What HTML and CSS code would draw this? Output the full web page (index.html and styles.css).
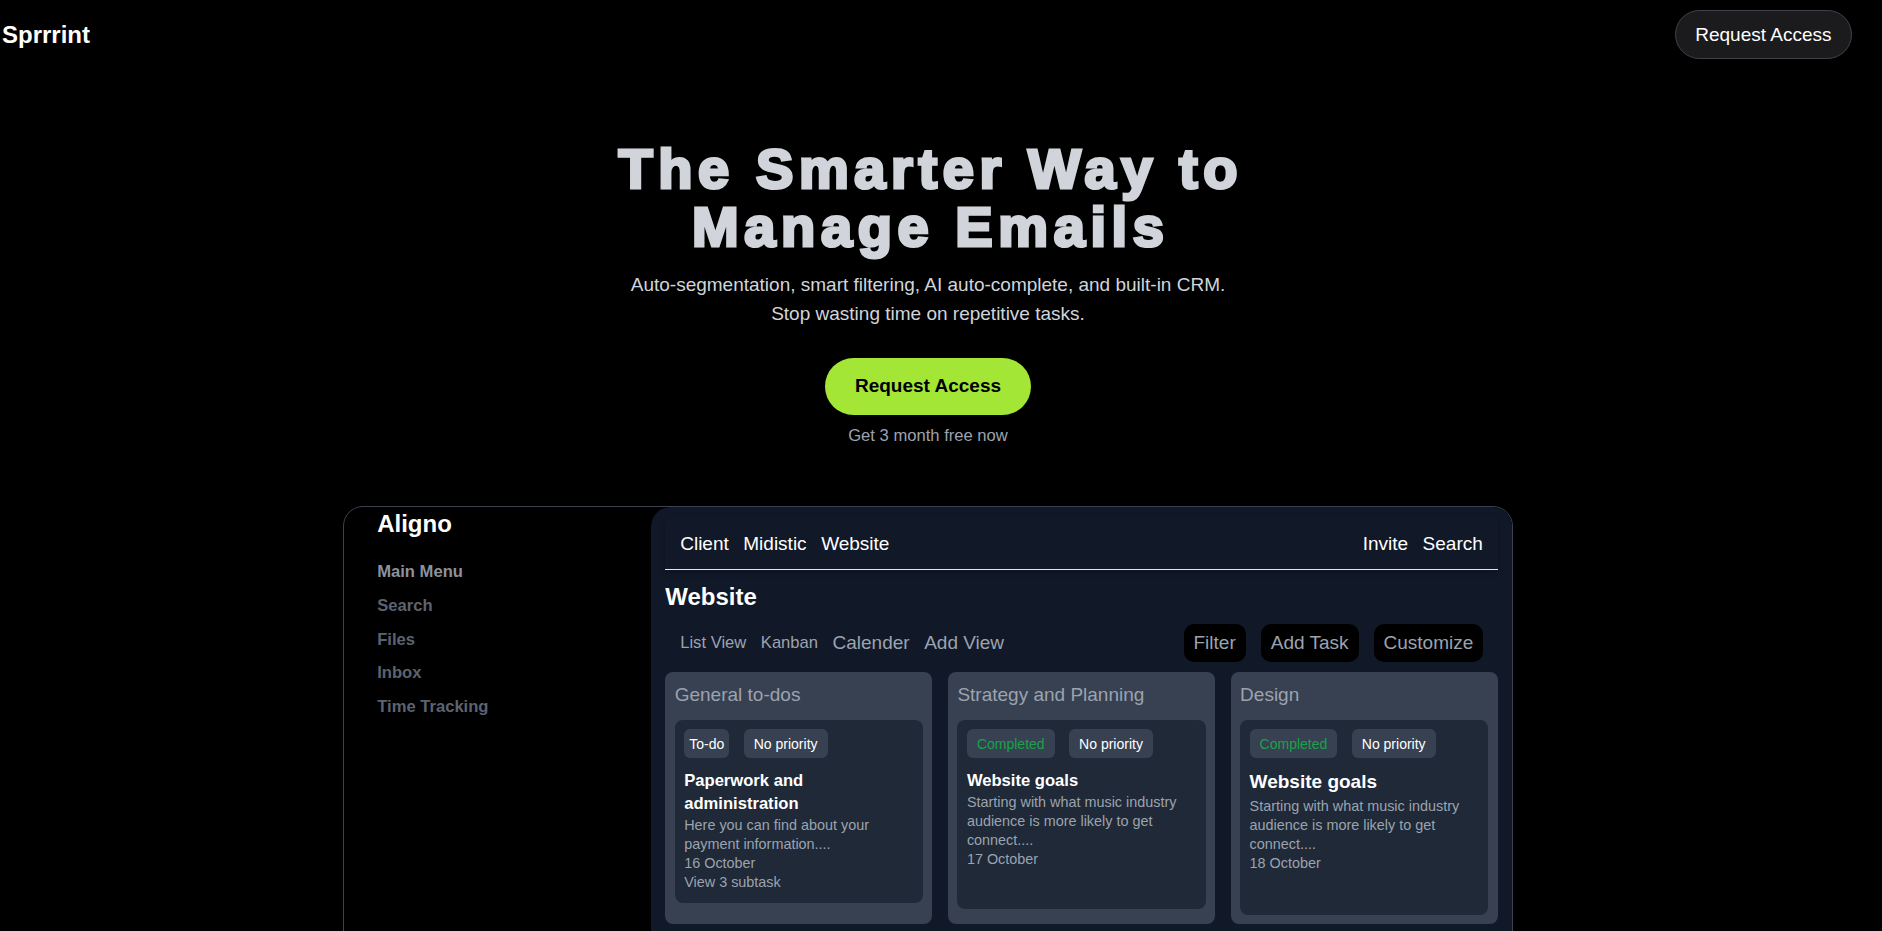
FILE: index.html
```html
<!DOCTYPE html>
<html lang="en">
<head>
<meta charset="utf-8">
<title>Sprrrint</title>
<link rel="stylesheet" href="styles.css">
</head>
<body>
<div class="page">
  <header class="header">
    <div class="logo">Sprrrint</div>
    <button class="header-btn">Request Access</button>
  </header>

  <section class="hero">
    <h1 class="hero-title">The Smarter Way to<br>Manage Emails</h1>
    <p class="hero-sub">Auto-segmentation, smart filtering, AI auto-complete, and built-in CRM.<br>Stop wasting time on repetitive tasks.</p>
    <div class="cta-wrap"><button class="cta">Request Access</button></div>
    <p class="free">Get 3 month free now</p>
  </section>

  <section class="dash">
    <aside class="sidebar">
      <div class="brand">Aligno</div>
      <nav class="menu">
        <a class="menu-item menu-main">Main Menu</a>
        <a class="menu-item">Search</a>
        <a class="menu-item">Files</a>
        <a class="menu-item">Inbox</a>
        <a class="menu-item">Time Tracking</a>
      </nav>
    </aside>

    <main class="panel">
      <div class="topbar">
        <div class="topbar-group">
          <span>Client</span><span>Midistic</span><span>Website</span>
        </div>
        <div class="topbar-group">
          <span>Invite</span><span>Search</span>
        </div>
      </div>

      <h2 class="panel-title">Website</h2>

      <div class="views">
        <div class="views-left">
          <span class="v-sm">List View</span>
          <span class="v-sm">Kanban</span>
          <span class="v-lg">Calender</span>
          <span class="v-lg">Add View</span>
        </div>
        <div class="views-right">
          <span class="tbtn">Filter</span>
          <span class="tbtn">Add Task</span>
          <span class="tbtn">Customize</span>
        </div>
      </div>

      <div class="cols">
        <div class="col">
          <div class="col-title">General to-dos</div>
          <div class="card">
            <div class="badges">
              <span class="badge tight">To-do</span>
              <span class="badge">No priority</span>
            </div>
            <h3 class="card-title">Paperwork and administration</h3>
            <div class="desc">
              <p>Here you can find about your payment information....</p>
              <p>16 October</p>
              <p>View 3 subtask</p>
            </div>
          </div>
        </div>

        <div class="col">
          <div class="col-title">Strategy and Planning</div>
          <div class="card">
            <div class="badges">
              <span class="badge done">Completed</span>
              <span class="badge">No priority</span>
            </div>
            <h3 class="card-title">Website goals</h3>
            <div class="desc">
              <p>Starting with what music industry audience is more likely to get connect....</p>
              <p>17 October</p>
            </div>
            <div class="spacer"></div>
          </div>
        </div>

        <div class="col">
          <div class="col-title">Design</div>
          <div class="card">
            <div class="badges">
              <span class="badge done">Completed</span>
              <span class="badge">No priority</span>
            </div>
            <h3 class="card-title big">Website goals</h3>
            <div class="desc">
              <p>Starting with what music industry audience is more likely to get connect....</p>
              <p>18 October</p>
            </div>
            <div class="spacer big"></div>
          </div>
        </div>
      </div>
    </main>
  </section>
</div>
</body>
</html>
```

FILE: styles.css
```css
* {
  box-sizing: border-box;
  margin: 0;
  padding: 0;
}

html,
body {
  overflow: hidden;
  background: #000;
}

body {
  font-family: "Liberation Sans", Arial, sans-serif;
  color: #fff;
}

.page {
  width: calc(100% - 26px);
}

/* Header */
.header {
  display: flex;
  justify-content: space-between;
  align-items: center;
  padding: 10px 4px 0 2px;
}

.logo {
  font-size: 24px;
  line-height: 28px;
  font-weight: 700;
  color: #fff;
}

.header-btn {
  font-family: inherit;
  font-size: 19px;
  line-height: 22px;
  padding: 12.5px 19.5px;
  border: 1px solid #3f434b;
  border-radius: 999px;
  background: #1b1b1e;
  color: #fff;
}

/* Hero */
.hero {
  text-align: center;
  padding-top: 80.7px;
}

.hero-title {
  font-size: 56px;
  line-height: 58.4px;
  font-weight: 700;
  color: #d1d5db;
  letter-spacing: 5.6px;
  padding-left: 5.6px;
  -webkit-text-stroke: 3.1px #d1d5db;
}

.hero-sub {
  margin-top: 13.3px;
  font-size: 19px;
  line-height: 29.25px;
  color: #d1d5db;
}

.cta-wrap {
  margin-top: 29.7px;
}

.cta {
  font-family: inherit;
  font-size: 19px;
  line-height: 22px;
  font-weight: 700;
  color: #000;
  background: #a3e635;
  border: none;
  border-radius: 999px;
  padding: 17.5px 29.6px;
}

.free {
  margin-top: 9px;
  font-size: 16.6px;
  line-height: 24px;
  color: #9ca3af;
}

/* Dashboard */
.dash {
  margin: 58px auto 0;
  width: 1170.6px;
  height: 450px;
  border: 1px solid #3b414d;
  border-radius: 20px;
  display: grid;
  grid-template-columns: 307px 1fr;
  background: #000;
}

.sidebar {
  padding: 3px 0 0 33.5px;
}

.brand {
  font-size: 24px;
  line-height: 28px;
  font-weight: 700;
  color: #fff;
}

.menu {
  margin-top: 17.3px;
  display: flex;
  flex-direction: column;
}

.menu-item {
  font-size: 16.6px;
  line-height: 33.7px;
  font-weight: 700;
  color: #5c6370;
}

.menu-main {
  color: #8b929e;
}

.panel {
  background: #111827;
  border-radius: 20px;
  padding: 10px 14.5px 12px;
}

.topbar {
  display: flex;
  justify-content: space-between;
  padding: 16.5px 15px 13.5px;
  border-bottom: 1px solid #e5e7eb;
  box-shadow: 0 2px 6px rgba(0, 0, 0, 0.25);
}

.topbar-group {
  display: flex;
  gap: 14.5px;
  font-size: 19px;
  line-height: 22px;
  color: #fff;
}

.panel-title {
  margin-top: 11px;
  font-size: 24px;
  line-height: 32px;
  font-weight: 700;
  color: #fff;
}

.views {
  margin-top: 11.3px;
  display: flex;
  justify-content: space-between;
  align-items: center;
  padding: 0 14.5px 0 15px;
}

.views-left {
  display: flex;
  align-items: center;
  gap: 14.5px;
  color: #9ca3af;
}

.v-sm {
  font-size: 16.6px;
}

.v-lg {
  font-size: 19px;
}

.views-right {
  display: flex;
  gap: 15px;
}

.tbtn {
  background: #000;
  color: #9ca3af;
  font-size: 19px;
  line-height: 21.4px;
  padding: 8px 10px;
  border-radius: 10px;
}

.cols {
  margin-top: 10.6px;
  display: grid;
  grid-template-columns: repeat(3, 1fr);
  gap: 15.5px;
}

.col {
  background: #374151;
  border-radius: 8px;
  padding: 9.5px 9.5px 9px;
}

.col-title {
  font-size: 19px;
  line-height: 26px;
  color: #9ca3af;
}

.card {
  margin-top: 12.2px;
  background: #1f2937;
  border-radius: 8px;
  padding: 9.5px 9.5px 10.5px;
}

.badges {
  display: flex;
  gap: 14.5px;
}

.badge {
  background: #374151;
  border-radius: 6px;
  font-size: 14px;
  line-height: 20px;
  padding: 4.2px 10px;
  color: #fff;
}

.badge.tight {
  padding: 4.2px 5px;
}

.badge.done {
  color: #16a34a;
}

.card-title {
  margin-top: 10.8px;
  font-size: 16.6px;
  line-height: 23px;
  font-weight: 700;
  color: #fff;
}

.card-title.big {
  font-size: 19px;
  line-height: 26px;
  margin-top: 11.3px;
}

.desc {
  margin-top: 1.6px;
  font-size: 14.4px;
  line-height: 19px;
  color: #9ca3af;
}

.spacer {
  height: 29px;
}

.spacer.big {
  height: 31.5px;
}
```
